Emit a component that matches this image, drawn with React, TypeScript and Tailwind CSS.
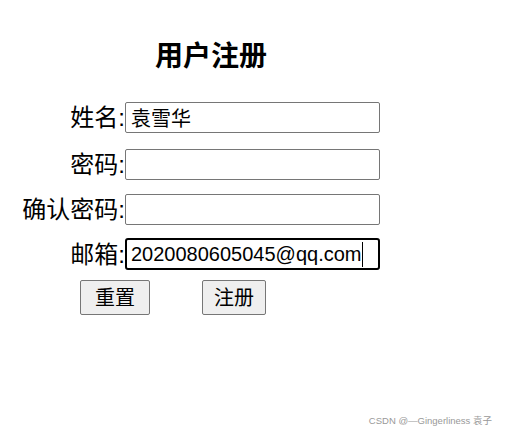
import React from 'react';

const font = { fontFamily: '"Liberation Sans", "Noto Sans CJK SC", sans-serif' };

interface FieldProps {
  label: string;
  value?: string;
  focused?: boolean;
  className?: string;
}

const Field: React.FC<FieldProps> = ({ label, value = '', focused, className = '' }) => (
  <div className={`flex items-center ${className}`}>
    <label className="w-[125px] text-right text-[24px] leading-[31px] text-black">{label}</label>
    {focused ? (
      // focused field, drawn with its caret after the text
      <div className="box-border flex h-[32px] w-[255px] items-center rounded-[3px] border-2 border-black bg-white px-[4px] text-[20px] text-black">
        <span className="leading-[24px]">{value}</span>
        <span className="h-[25px] w-px bg-black" />
      </div>
    ) : (
      <input
        readOnly
        value={value}
        className="box-border h-[31px] w-[255px] rounded-[2px] border border-[#767676] bg-white px-[5px] text-[20px] text-black outline-none"
        style={font}
      />
    )}
  </div>
);

export default function App() {
  return (
    <div className="relative h-[437px] w-[507px] bg-white" style={font}>
      <div className="flex flex-col pt-[38px]">
        <h1 className="ml-[155px] text-[28px] font-bold leading-[38px] text-black">用户注册</h1>

        <div className="mt-[26px] flex flex-col">
          <Field label="姓名:" value="袁雪华" />
          <Field label="密码:" className="mt-[16px]" />
          <Field label="确认密码:" className="mt-[14px]" />
          <Field label="邮箱:" value="2020080605045@qq.com" focused className="mt-[13px]" />
        </div>

        <div className="mt-[10px] flex">
          <button className="ml-[80px] h-[35px] w-[70px] rounded-[2px] border border-[#767676] bg-[#efefef] text-[20px] text-black">
            重置
          </button>
          <button className="ml-[52px] h-[35px] w-[64px] rounded-[2px] border border-[#767676] bg-[#efefef] text-[20px] text-black">
            注册
          </button>
        </div>
      </div>

      <div className="absolute bottom-[9px] right-[15px] text-[9.5px] text-[#999]">CSDN @—Gingerliness 袁子</div>
    </div>
  );
}
